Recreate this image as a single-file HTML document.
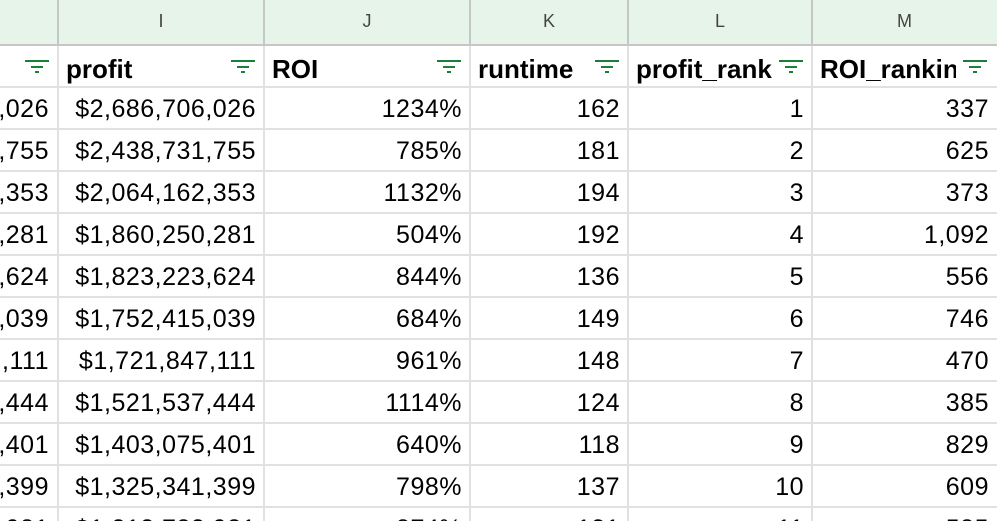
<!DOCTYPE html>
<html><head><style>
html,body{margin:0;width:997px;height:521px;overflow:hidden}
body{background:#fff;font-family:"Liberation Sans",sans-serif;position:relative}
.hdr{position:absolute;left:0;top:0;width:997px;height:44px;background:#e6f4ea;border-bottom:2px solid #c4c7c5}
.hl{position:absolute;top:0;height:44px;width:2px;background:#c4c7c5}
.lt{position:absolute;top:11px;font-size:18px;color:#444;text-align:center}
.vl{position:absolute;top:46px;height:475px;width:2px;background:#e1e1e1}
.hz{position:absolute;left:0;width:997px;height:2px;background:#e1e1e1}
.c{position:absolute;font-size:25px;letter-spacing:0.5px;color:#000;text-align:right;white-space:nowrap;overflow:hidden}
.h{position:absolute;top:54px;font-size:26px;font-weight:bold;color:#000;white-space:nowrap;overflow:hidden}
.f{position:absolute;top:60px;width:24px;height:14px}
</style></head><body>
<div class="hdr"></div>
<div class="hl" style="left:57px"></div><div class="hl" style="left:263px"></div><div class="hl" style="left:469px"></div><div class="hl" style="left:627px"></div><div class="hl" style="left:811px"></div>
<div class="lt" style="left:58px;width:206px">I</div>
<div class="lt" style="left:264px;width:206px">J</div>
<div class="lt" style="left:470px;width:158px">K</div>
<div class="lt" style="left:628px;width:184px">L</div>
<div class="lt" style="left:812px;width:185px">M</div>
<div class="vl" style="left:57px"></div><div class="vl" style="left:263px"></div><div class="vl" style="left:469px"></div><div class="vl" style="left:627px"></div><div class="vl" style="left:811px"></div>
<div class="hz" style="top:86px"></div><div class="hz" style="top:128px"></div><div class="hz" style="top:170px"></div><div class="hz" style="top:212px"></div><div class="hz" style="top:254px"></div><div class="hz" style="top:296px"></div><div class="hz" style="top:338px"></div><div class="hz" style="top:380px"></div><div class="hz" style="top:422px"></div><div class="hz" style="top:464px"></div><div class="hz" style="top:506px"></div>
<div class="h" style="left:66px;width:150px">profit</div>
<div class="h" style="left:272px;width:150px">ROI</div>
<div class="h" style="left:478px;width:110px">runtime</div>
<div class="h" style="left:636px;width:137px">profit_ranking</div>
<div class="h" style="left:820px;width:136px">ROI_ranking</div>
<svg class="f" style="left:25px" viewBox="0 0 24 14"><g fill="#188038"><rect x="0" y="0" width="24" height="2"/><rect x="6" y="6" width="12" height="2"/><rect x="10" y="11" width="4" height="2"/></g></svg>
<svg class="f" style="left:231px" viewBox="0 0 24 14"><g fill="#188038"><rect x="0" y="0" width="24" height="2"/><rect x="6" y="6" width="12" height="2"/><rect x="10" y="11" width="4" height="2"/></g></svg>
<svg class="f" style="left:437px" viewBox="0 0 24 14"><g fill="#188038"><rect x="0" y="0" width="24" height="2"/><rect x="6" y="6" width="12" height="2"/><rect x="10" y="11" width="4" height="2"/></g></svg>
<svg class="f" style="left:595px" viewBox="0 0 24 14"><g fill="#188038"><rect x="0" y="0" width="24" height="2"/><rect x="6" y="6" width="12" height="2"/><rect x="10" y="11" width="4" height="2"/></g></svg>
<svg class="f" style="left:779px" viewBox="0 0 24 14"><g fill="#188038"><rect x="0" y="0" width="24" height="2"/><rect x="6" y="6" width="12" height="2"/><rect x="10" y="11" width="4" height="2"/></g></svg>
<svg class="f" style="left:963px" viewBox="0 0 24 14"><g fill="#188038"><rect x="0" y="0" width="24" height="2"/><rect x="6" y="6" width="12" height="2"/><rect x="10" y="11" width="4" height="2"/></g></svg>
<div id="rows"></div>
<script>
var d=[["$2,686,706,026","1234%","162","1","337"],["$2,438,731,755","785%","181","2","625"],["$2,064,162,353","1132%","194","3","373"],["$1,860,250,281","504%","192","4","1,092"],["$1,823,223,624","844%","136","5","556"],["$1,752,415,039","684%","149","6","746"],["$1,721,847,111","961%","148","7","470"],["$1,521,537,444","1114%","124","8","385"],["$1,403,075,401","640%","118","9","829"],["$1,325,341,399","798%","137","10","609"],["$1,313,783,981","874%","121","11","585"]];
var cols=[[0,57],[58,206],[264,206],[470,158],[628,184],[812,185]];
var h="";
d.forEach(function(r,i){var t=95+i*42;
var v=[r[0].slice(-4),r[0],r[1],r[2],r[3],r[4]];
v.forEach(function(x,j){var c=cols[j];h+='<div class="c" style="left:'+c[0]+'px;width:'+(c[1]-8)+'px;top:'+t+'px;direction:rtl"><span style="direction:ltr;unicode-bidi:bidi-override">'+x+'</span></div>';});});
document.getElementById("rows").innerHTML=h;
</script>
</body></html>
